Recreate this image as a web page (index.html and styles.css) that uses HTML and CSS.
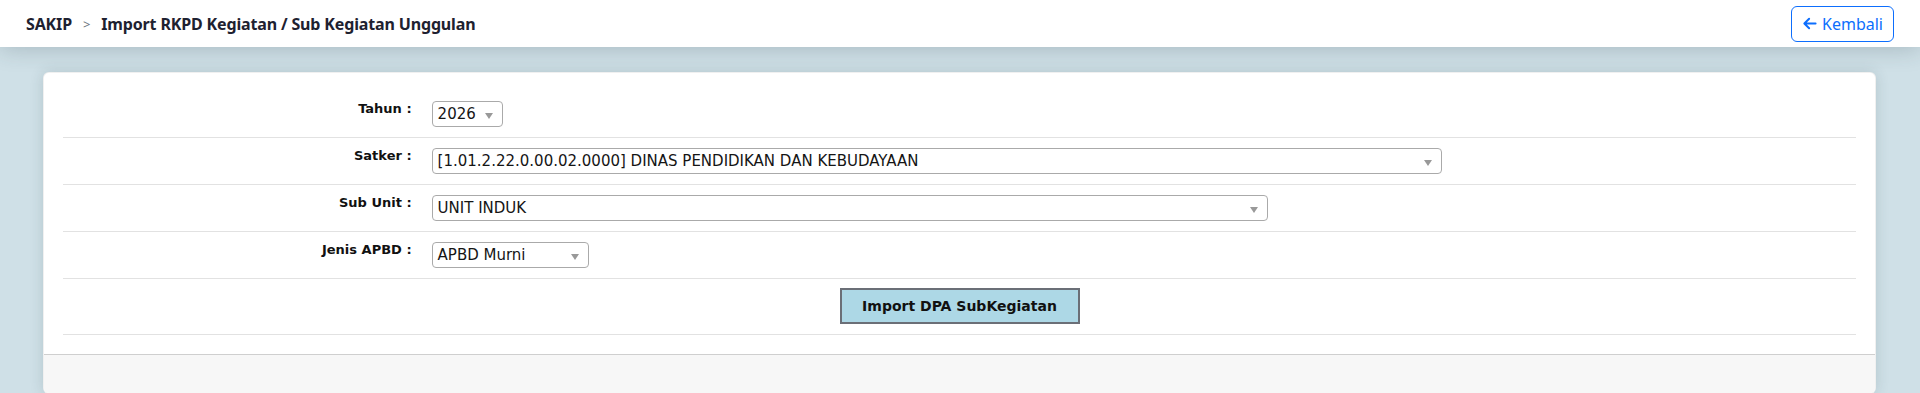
FILE: index.html
```html
<!DOCTYPE html>
<html lang="id">
<head>
    <meta charset="UTF-8">
    <meta name="viewport" content="width=device-width, initial-scale=1.0">
    <title>Import RKPD Kegiatan / Sub Kegiatan Unggulan</title>
    <link rel="stylesheet" href="styles.css">
</head>
<body>

<header class="topbar">
    <nav class="crumbs">
        <span class="crumb">SAKIP</span>
        <span class="crumb-sep">&gt;</span>
        <span class="crumb">Import RKPD Kegiatan / Sub Kegiatan Unggulan</span>
    </nav>
    <a href="#" class="btn-back">
        <svg class="icon-back" viewBox="0 0 16 16" width="15" height="15">
            <path d="M14.5 8H2.6M7.6 2.9 2.5 8l5.1 5.1" fill="none" stroke="currentColor" stroke-width="2.1" stroke-linecap="round" stroke-linejoin="round"/>
        </svg>
        Kembali
    </a>
</header>

<main class="content">
    <div class="card">
        <div class="card-body">
            <table class="form-table">
                <tr>
                    <th>Tahun :</th>
                    <td>
                        <span class="sel sel-tahun"><span class="sel-text">2026</span><b class="sel-arrow"></b></span>
                    </td>
                </tr>
                <tr>
                    <th>Satker :</th>
                    <td>
                        <span class="sel sel-satker"><span class="sel-text">[1.01.2.22.0.00.02.0000] DINAS PENDIDIKAN DAN KEBUDAYAAN</span><b class="sel-arrow"></b></span>
                    </td>
                </tr>
                <tr>
                    <th>Sub Unit :</th>
                    <td>
                        <span class="sel sel-subunit"><span class="sel-text">UNIT INDUK</span><b class="sel-arrow"></b></span>
                    </td>
                </tr>
                <tr>
                    <th>Jenis APBD :</th>
                    <td>
                        <span class="sel sel-jenis"><span class="sel-text">APBD Murni</span><b class="sel-arrow"></b></span>
                    </td>
                </tr>
                <tr>
                    <td colspan="2" class="actions">
                        <button type="button" class="btn-import">Import DPA SubKegiatan</button>
                    </td>
                </tr>
            </table>
        </div>
        <div class="card-footer"></div>
    </div>
</main>

</body>
</html>
```

FILE: styles.css
```css
body {
    margin: 0;
    background-color: #cfe0e7;
    font-family: "DejaVu Sans", Verdana, sans-serif;
    color: #111;
}
.topbar {
    position: relative;
    z-index: 2;
    height: 47px;
    padding: 0 26px 0 26px;
    background-color: #fff;
    box-shadow: 0 3px 22px rgba(40, 60, 70, 0.22);
    display: flex;
    align-items: center;
    justify-content: space-between;
}
.crumbs {
    display: flex;
    align-items: center;
    font-family: "Noto Sans", "Open Sans", sans-serif;
    font-size: 16px;
    font-weight: 700;
    letter-spacing: -0.15px;
    color: #1e2130;
}
.crumb-sep {
    font-size: 13px;
    font-weight: 400;
    color: #6c757d;
    padding: 0 11px;
}
.btn-back {
    display: flex;
    align-items: center;
    gap: 5px;
    height: 36px;
    box-sizing: border-box;
    padding: 0 10px;
    border: 1px solid #0d6efd;
    border-radius: 6px;
    color: #0d6efd;
    font-family: "Noto Sans", "Open Sans", sans-serif;
    font-size: 16px;
    text-decoration: none;
}
.icon-back {
    display: block;
}
.content {
    padding: 25px 44px 0 43px;
}
.card {
    background-color: #fff;
    border: 1px solid rgba(0, 0, 0, 0.06);
    border-radius: 6px;
    box-shadow: 0 0 14px rgba(40, 60, 70, 0.16);
    overflow: hidden;
}
.card-body {
    padding: 18px 19px 19px 19px;
}
.form-table {
    width: 100%;
    border-collapse: collapse;
}
.form-table th,
.form-table td {
    border-bottom: 1px solid #e2e2e2;
    padding: 10px 0;
    vertical-align: top;
}
.form-table th {
    width: 20%;
    padding-right: 10px;
    text-align: right;
    font-size: 13px;
    line-height: 16px;
    font-weight: 700;
    color: #111;
}
.form-table td {
    padding-left: 10px;
}
.sel {
    display: flex;
    align-items: center;
    justify-content: space-between;
    box-sizing: border-box;
    height: 26px;
    border: 1px solid #aaa;
    border-radius: 4px;
    background-color: #fff;
    padding: 0 9px 0 5px;
    font-size: 15px;
    line-height: 24px;
    color: #151515;
}
.sel-tahun { width: 71px; }
.sel-satker { width: 1010px; }
.sel-subunit { width: 836px; }
.sel-jenis { width: 157px; }
.sel-arrow {
    margin-top: 3px;
    width: 0;
    height: 0;
    border-left: 4px solid transparent;
    border-right: 4px solid transparent;
    border-top: 6px solid #999;
}
.form-table .actions {
    padding: 9px 0 10px 0;
    text-align: center;
}
.btn-import {
    width: 240px;
    height: 36px;
    background-color: #add8e6;
    border: 2px solid #6b6f77;
    font-family: "DejaVu Sans", Verdana, sans-serif;
    font-size: 14px;
    font-weight: 700;
    color: #111;
    cursor: pointer;
}
.card-footer {
    height: 38px;
    background-color: #f7f7f7;
    border-top: 1px solid #cfcfcf;
}
```
